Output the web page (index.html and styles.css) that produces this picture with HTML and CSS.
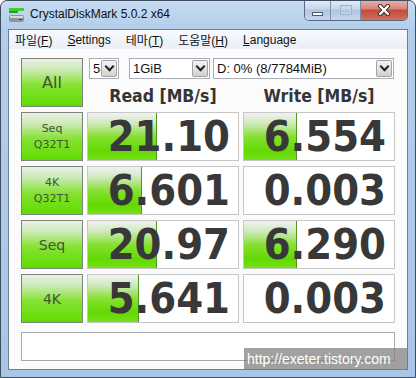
FILE: index.html
```html
<!DOCTYPE html>
<html lang="ko">
<head>
    <meta charset="UTF-8">
    <title>CrystalDiskMark 5.0.2 x64</title>
    <link rel="stylesheet" href="styles.css">
</head>
<body>
    <div class="window">
        <div class="titlebar">
            <svg class="app-icon" width="17" height="16" viewBox="0 0 17 16">
                <rect x="1" y="1" width="15" height="3" fill="#3fcf2a"/>
                <rect x="1" y="4" width="9" height="2" fill="#2a9d1c"/>
                <rect x="1" y="8" width="15" height="7" rx="2" fill="#8c949c"/>
                <rect x="2" y="9" width="13" height="2" fill="#d4d9de"/>
                <rect x="11" y="12" width="3" height="1" fill="#3a3f44"/>
            </svg>
            <span class="title">CrystalDiskMark 5.0.2 x64</span>
            <div class="caption-btns">
                <span class="cb min"><i></i></span>
                <span class="cb max"><i></i></span>
                <span class="cb close">
                    <svg width="14" height="12" viewBox="0 0 14 12">
                        <path d="M3 2 L11 10 M11 2 L3 10" stroke="#3a2a2a" stroke-width="4.2" stroke-linecap="round"/>
                        <path d="M3 2 L11 10 M11 2 L3 10" stroke="#fff" stroke-width="2.4" stroke-linecap="round"/>
                    </svg>
                </span>
            </div>
        </div>

        <div class="client">
            <div class="menubar">
                <span>파일(<u>F</u>)</span>
                <span><u>S</u>ettings</span>
                <span>테마(<u>T</u>)</span>
                <span>도움말(<u>H</u>)</span>
                <span><u>L</u>anguage</span>
            </div>

            <div class="main">
                <div class="grid">
                    <div class="btn all">All</div>
                    <div class="opts">
                        <div class="selects">
                            <div class="sel sel-count"><span>5</span><b class="arrow"></b></div>
                            <div class="sel sel-size"><span>1GiB</span><b class="arrow"></b></div>
                            <div class="sel sel-drive"><span>D: 0% (8/7784MiB)</span><b class="arrow"></b></div>
                        </div>
                        <div class="heads">
                            <span>Read [MB/s]</span>
                            <span>Write [MB/s]</span>
                        </div>
                    </div>

                    <div class="btn">Seq<br>Q32T1</div>
                    <div class="val"><i class="bar" style="width: 69px"></i><span>21.10</span></div>
                    <div class="val"><i class="bar" style="width: 53px"></i><span>6.554</span></div>

                    <div class="btn">4K<br>Q32T1</div>
                    <div class="val"><i class="bar" style="width: 54px"></i><span>6.601</span></div>
                    <div class="val"><span>0.003</span></div>

                    <div class="btn big">Seq</div>
                    <div class="val"><i class="bar" style="width: 69px"></i><span>20.97</span></div>
                    <div class="val"><i class="bar" style="width: 53px"></i><span>6.290</span></div>

                    <div class="btn big">4K</div>
                    <div class="val"><i class="bar" style="width: 51px"></i><span>5.641</span></div>
                    <div class="val"><span>0.003</span></div>
                </div>
                <div class="comment"></div>
            </div>
        </div>

        <div class="watermark">http://exeter.tistory.com</div>
    </div>
</body>
</html>
```

FILE: styles.css
```css
body {
    margin: 0;
    font-family: "Liberation Sans", "Noto Sans CJK KR", sans-serif;
}
.window {
    position: relative;
    width: 416px;
    height: 378px;
    box-sizing: border-box;
    border: 1px solid #3f4d60;
    border-radius: 7px 7px 0 0;
    padding: 0 7px 7px;
    background: linear-gradient(to bottom, #c6dbf1 0, #b4cdea 28px, #a9c6e7 100%);
    display: flex;
    flex-direction: column;
    overflow: hidden;
}
.titlebar {
    height: 28px;
    display: flex;
    align-items: flex-start;
}
.app-icon {
    margin: 6px 5px 0 0;
}
.title {
    margin-top: 6px;
    font-size: 12px;
    color: #111;
}
.caption-btns {
    margin-left: auto;
    margin-top: -1px;
    display: flex;
    height: 20px;
    border: 1px solid #5b6c82;
    border-top: 0;
    border-radius: 0 0 5px 5px;
    overflow: hidden;
}
.cb {
    display: flex;
    align-items: center;
    justify-content: center;
    height: 20px;
    background: linear-gradient(to bottom, #e3edf8 0, #c6d7ea 45%, #aec5df 50%, #c4d8ee 100%);
    border-right: 1px solid #7d90a8;
}
.cb.min { width: 25px; }
.cb.max { width: 29px; }
.cb.close {
    width: 46px;
    border-right: 0;
    background: linear-gradient(to bottom, #e8b5aa 0, #d6847a 45%, #c24a3c 50%, #d2705a 100%);
}
.cb.min i {
    width: 9px;
    height: 2px;
    margin-top: 7px;
    background: #fff;
    border: 1px solid #4d5b6d;
}
.cb.max i {
    width: 8px;
    height: 6px;
    border: 1px solid #c8d6e6;
    box-shadow: 0 0 0 1px #9fb3ca;
}

.client {
    flex: 1;
    border: 1px solid #6a7f99;
    background: #fbfbfb;
    display: flex;
    flex-direction: column;
}
.menubar {
    height: 19px;
    display: flex;
    align-items: center;
    gap: 15px;
    padding-left: 6px;
    font-size: 12px;
    color: #111;
    background: linear-gradient(to bottom, #f8fafd, #e9eff7);
}
.main {
    padding: 9px 0 0 12px;
}
.grid {
    display: grid;
    grid-template-columns: 62px 152px 152px;
    grid-auto-rows: 49px;
    gap: 5px 4px;
}
.btn {
    box-sizing: border-box;
    border: 1px solid #7d857a;
    background: linear-gradient(to bottom, #eaf0e6 0, #cdeab8 22%, #86e232 55%, #5fdc00 100%);
    color: #3c5536;
    display: flex;
    align-items: center;
    justify-content: center;
    text-align: center;
    font-family: "DejaVu Sans", sans-serif;
    font-size: 11px;
    line-height: 16px;
}
.btn.all {
    font-size: 16px;
}
.btn.big {
    font-size: 14px;
}
.opts {
    grid-column: 2 / 4;
    display: flex;
    flex-direction: column;
}
.selects {
    display: flex;
    height: 21px;
    font-size: 13px;
    color: #111;
}
.sel {
    box-sizing: border-box;
    height: 21px;
    border: 1px solid #a8aeb6;
    background: #fff;
    display: flex;
    align-items: center;
    justify-content: space-between;
    padding-left: 3px;
}
.sel-count { width: 30px; margin-left: 2px; }
.sel-size { width: 81px; margin-left: 10px; }
.sel-drive { width: 181px; margin-left: 3px; }
.arrow {
    position: relative;
    box-sizing: border-box;
    width: 16px;
    height: 17px;
    margin-right: 1px;
    border: 1px solid #a3a3a3;
    border-radius: 2px;
    background: linear-gradient(to bottom, #f4f4f4, #d2d2d2);
}
.arrow::after {
    content: "";
    position: absolute;
    left: 4px;
    top: 2px;
    width: 5px;
    height: 5px;
    border-right: 2px solid #222;
    border-bottom: 2px solid #222;
    transform: rotate(45deg);
}
.heads {
    display: grid;
    grid-template-columns: 152px 152px;
    gap: 4px;
    margin-top: 7px;
    text-align: center;
    font-family: "DejaVu Sans Condensed", "DejaVu Sans", sans-serif;
    font-weight: bold;
    font-size: 17.5px;
    color: #353535;
}
.val {
    position: relative;
    box-sizing: border-box;
    border: 1px solid #c6c6c6;
    background: #fff;
    text-align: right;
    padding-right: 8px;
    font-family: "DejaVu Sans Condensed", "DejaVu Sans", sans-serif;
    font-weight: bold;
    font-size: 43px;
    line-height: 47px;
    color: #383838;
    overflow: hidden;
}
.val span {
    position: relative;
}
.bar {
    position: absolute;
    left: 0;
    top: 0;
    bottom: 0;
    background: linear-gradient(to bottom, #f2f2f2 0, #cfe9bc 22%, #88e034 50%, #62d900 80%, #76e01a 100%);
    box-shadow: inset -1px 0 #4f9a1c;
}
.comment {
    box-sizing: border-box;
    margin-top: 9px;
    width: 374px;
    height: 29px;
    border: 1px solid #a9a9a9;
    background: #fff;
}
.watermark {
    position: absolute;
    left: 243px;
    top: 347px;
    width: 164px;
    height: 22px;
    background: rgba(125, 125, 125, 0.72);
    color: #fff;
    font-size: 14px;
    line-height: 22px;
    padding-left: 3px;
    box-sizing: border-box;
}
```
